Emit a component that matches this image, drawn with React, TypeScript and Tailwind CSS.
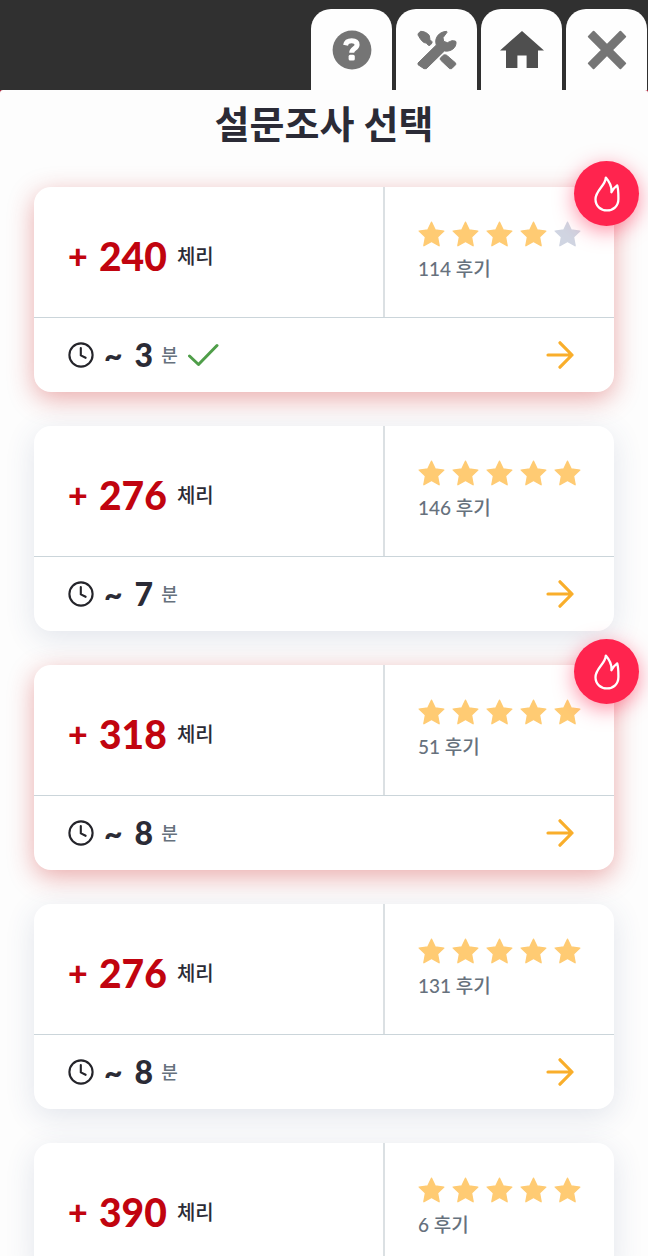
import React from 'react';

interface Survey {
  id: number;
  reward: number;
  rating: number;
  reviews: number;
  minutes?: number;
  hot?: boolean;
  checked?: boolean;
}

const App: React.FC = () => {
  return (
    <div className="flex h-screen flex-col overflow-hidden bg-[#a3122a] font-['Lato','Noto_Sans_CJK_KR',sans-serif] text-[#2b2b36]">
      {/* Top bar with the tab buttons */}
      <header className="flex shrink-0 justify-end bg-[#303030] pt-[9px] pr-px">
        <nav className="flex gap-1">
          {TABS.map(({ label, icon }) => (
            <button
              key={label}
              aria-label={label}
              className="flex h-[81px] w-[81px] items-center justify-center rounded-t-[20px] bg-[#fefefe] text-[#757575] cursor-pointer"
            >
              {icon}
            </button>
          ))}
        </nav>
      </header>

      <main className="flex-1 overflow-hidden rounded-t-[3px] bg-[#fdfdfd] px-[34px]">
        <h1 className="pt-[7px] text-center text-[38px] leading-[52px] font-bold">설문조사 선택</h1>

        <div className="mt-[38px] flex flex-col gap-[34px]">
          {SURVEYS.map((survey) => (
            <SurveyCard key={survey.id} survey={survey} />
          ))}
        </div>
      </main>
    </div>
  );
};

const SurveyCard: React.FC<{ survey: Survey }> = ({ survey }) => {
  const { reward, rating, reviews, minutes, hot, checked } = survey;

  return (
    <article
      className={`relative rounded-[17px] bg-white ${
        hot
          ? 'shadow-[0_7px_26px_rgba(205,40,40,0.38)]'
          : 'shadow-[0_7px_30px_rgba(60,80,130,0.14)]'
      }`}
    >
      {/* Reward and rating */}
      <div className="flex h-[130px]">
        <div className="flex flex-1 items-center pt-2 pl-[34px] leading-[56px]">
          <span className="w-[31px] text-[34px] font-black text-[#c1040f]">+</span>
          <span className="text-[39px] font-black text-[#c1040f]">{reward}</span>
          <span className="ml-[10px] text-[20px] font-medium">체리</span>
        </div>
        <div className="w-[231px] border-l-2 border-[#dbe0e3] pt-[34px] pl-[33px]">
          <Stars rating={rating} />
          <p className="mt-2 text-[19px] leading-7 font-medium text-[#66717d]">{reviews} 후기</p>
        </div>
      </div>

      {/* Duration */}
      {minutes && (
        <div className="flex h-[75px] items-center justify-between border-t border-[#cbd5da] pr-10 pl-[34px]">
          <div className="flex items-center">
            <ClockIcon />
            <span className="ml-[10px] flex gap-3 text-[32px] leading-9 font-black">
              <span>~</span>
              <span>{minutes}</span>
            </span>
            <span className="ml-2 text-[18px] leading-7 font-medium text-[#66717d]">분</span>
            {checked && <CheckIcon />}
          </div>
          <a href="#" aria-label={`${reward} 체리`}>
            <ArrowIcon />
          </a>
        </div>
      )}

      {hot && (
        <div className="absolute -top-[26px] -right-[25px] flex h-[65px] w-[65px] items-center justify-center rounded-full bg-[#ff244e] shadow-[0_5px_20px_rgba(255,36,78,0.5)]">
          <FlameIcon />
        </div>
      )}
    </article>
  );
};

const Stars: React.FC<{ rating: number }> = ({ rating }) => (
  <div className="flex gap-[7px]">
    {[1, 2, 3, 4, 5].map((n) => (
      <svg
        key={n}
        viewBox="0 0 27 26"
        className={`h-[26px] w-[27px] ${n <= rating ? 'text-[#ffcb73]' : 'text-[#d0d5e2]'}`}
        fill="currentColor"
        stroke="currentColor"
        strokeWidth="1.4"
        strokeLinejoin="round"
      >
        <path d="M13.5 1.2 17.2 9 25.8 10.1 19.5 16 21.1 24.7 13.5 20.5 5.9 24.7 7.5 16 1.2 10.1 9.8 9Z" />
      </svg>
    ))}
  </div>
);

const ClockIcon = () => (
  <svg viewBox="0 0 26 26" className="h-[26px] w-[26px]" fill="none" stroke="#24242a" strokeWidth="2.1" strokeLinecap="round" strokeLinejoin="round">
    <circle cx="13" cy="13" r="11.6" />
    <path d="M12.8 6v7.4l4.8 2.4" />
  </svg>
);

const CheckIcon = () => (
  <svg viewBox="0 0 32 24" className="ml-[9px] h-6 w-8" fill="none" stroke="#4f9e49" strokeWidth="3" strokeLinecap="round" strokeLinejoin="round">
    <path d="M2.5 13 11.5 21.5 30 2.5" />
  </svg>
);

const ArrowIcon = () => (
  <svg viewBox="0 0 28 28" className="h-7 w-7" fill="none" stroke="#f9ae2b" strokeWidth="3.2" strokeLinecap="round" strokeLinejoin="round">
    <path d="M2 14h24M14 1.8 26 14 14 26.2" />
  </svg>
);

const FlameIcon = () => (
  <svg viewBox="0 0 26 36" className="h-9 w-[26px]" fill="none" stroke="#fff" strokeWidth="2.3" strokeLinecap="round" strokeLinejoin="round">
    <path d="M11.8 1.6C11.6 9.6 1.5 14.4 1.5 23.2c0 6.8 5 11.2 11.5 11.2s11.4-4.4 11.4-11.4c0-4.8.1-9.4-1.2-13.6-2.4 1.8-4.4 3.6-5.8 6.8.6-5.6-2-10.4-5.6-14.6Z" />
  </svg>
);

const TABS = [
  {
    label: '도움말',
    icon: (
      <svg viewBox="0 0 40 40" className="h-10 w-10">
        <circle cx="20" cy="20" r="19.4" fill="currentColor" />
        <path d="M13.6 15.2c.6-3.3 3-4.4 6.1-4.4 3.5 0 5.4 1.6 5.4 4 0 3.8-5.4 3.8-5.4 8" fill="none" stroke="#fff" strokeWidth="5" />
        <rect x="16.6" y="24.8" width="6.2" height="5.8" rx="1.6" fill="#fff" />
      </svg>
    ),
  },
  {
    label: '설정',
    icon: (
      <svg viewBox="350 88 120 120" className="h-10 w-10" fill="currentColor" stroke="currentColor" strokeWidth="3" strokeLinejoin="round">
        <path d="M354 98 361 92C369 92 382 96 387 105L389 117 395 123 395 127 389 134 384 134 378 127C366 127 361 116 353 103Z" />
        <path d="M353 187 408 133C401 113 415 93 439 92L440 95 428 111 430 122 441 126 455 120 464 121 467 123C469 142 451 154 432 151L378 204 371 204 353 192Z" />
        <path d="M420 172 430 163C438 161 441 165 445 169L466 187 466 192 454 204 448 204 429 186C423 180 418 178 420 172Z" />
      </svg>
    ),
  },
  {
    label: '홈',
    icon: (
      <svg viewBox="0 0 44 38" className="h-[38px] w-11 text-[#4f4f4f]" fill="currentColor">
        <path d="M22 0 44 19.4h-6V37H26.6V24.4h-9.2V37H6V19.4H0Z" />
      </svg>
    ),
  },
  {
    label: '닫기',
    icon: (
      <svg viewBox="0 0 40 40" className="h-10 w-10" fill="currentColor" stroke="currentColor" strokeWidth="2" strokeLinejoin="round">
        <path d="M6.6 1.8 20 15.2 33.4 1.8 38.2 6.6 24.8 20 38.2 33.4 33.4 38.2 20 24.8 6.6 38.2 1.8 33.4 15.2 20 1.8 6.6Z" />
      </svg>
    ),
  },
];

const SURVEYS: Survey[] = [
  { id: 1, reward: 240, rating: 4, reviews: 114, minutes: 3, hot: true, checked: true },
  { id: 2, reward: 276, rating: 5, reviews: 146, minutes: 7 },
  { id: 3, reward: 318, rating: 5, reviews: 51, minutes: 8, hot: true },
  { id: 4, reward: 276, rating: 5, reviews: 131, minutes: 8 },
  { id: 5, reward: 390, rating: 5, reviews: 6 },
];

export default App;
